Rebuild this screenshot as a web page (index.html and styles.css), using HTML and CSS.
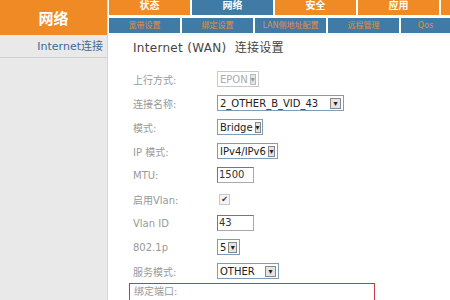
FILE: index.html
```html
<!DOCTYPE html>
<html lang="zh-CN">
<head>
    <meta charset="UTF-8">
    <title>Internet (WAN) 连接设置</title>
    <link rel="stylesheet" href="styles.css">
</head>
<body>

    <div class="page">
        <div class="sidebar">
            <div class="brand">网络</div>
            <div class="side-item">Internet连接</div>
        </div>

        <div class="main">
            <div class="tabs">
                <div class="tab">状态</div>
                <div class="tab active">网络</div>
                <div class="tab">安全</div>
                <div class="tab">应用</div>
                <div class="tab rest"></div>
            </div>
            <div class="subtabs">
                <div class="subtab">宽带设置</div>
                <div class="subtab">绑定设置</div>
                <div class="subtab">LAN侧地址配置</div>
                <div class="subtab">远程管理</div>
                <div class="subtab last">Qos</div>
            </div>

            <div class="content">
                <h2>Internet (WAN) &nbsp;连接设置</h2>

                <div class="row">
                    <label>上行方式:</label>
                    <span class="select disabled" style="width: 38px">EPON<span class="arrow">▾</span></span>
                </div>
                <div class="row">
                    <label>连接名称:</label>
                    <span class="select" style="width: 123px">2_OTHER_B_VID_43<span class="arrow">▾</span></span>
                </div>
                <div class="row">
                    <label>模式:</label>
                    <span class="select" style="width: 42px">Bridge<span class="arrow">▾</span></span>
                </div>
                <div class="row">
                    <label>IP 模式:</label>
                    <span class="select" style="width: 57px">IPv4/IPv6<span class="arrow">▾</span></span>
                </div>
                <div class="row">
                    <label>MTU:</label>
                    <span class="input">1500</span>
                </div>
                <div class="row">
                    <label>启用Vlan:</label>
                    <span class="check">✔</span>
                </div>
                <div class="row">
                    <label>Vlan ID</label>
                    <span class="input">43</span>
                </div>
                <div class="row">
                    <label>802.1p</label>
                    <span class="select" style="width: 19px">5<span class="arrow">▾</span></span>
                </div>
                <div class="row">
                    <label>服务模式:</label>
                    <span class="select" style="width: 58px">OTHER<span class="arrow">▾</span></span>
                </div>

                <div class="bind-box">
                    <label>绑定端口:</label>
                </div>
            </div>
        </div>
    </div>

</body>
</html>
```

FILE: styles.css
```css
body {
    margin: 0;
    padding: 0;
    font-family: "DejaVu Sans", "Noto Sans CJK SC", sans-serif;
    background: #fff;
    width: 450px;
    height: 300px;
    overflow: hidden;
}

.page {
    display: flex;
    height: 300px;
}

.sidebar {
    width: 107px;
    flex-shrink: 0;
    background: #e9e9e9;
    border-right: 1px solid #d6d6d6;
}

.brand {
    height: 35px;
    background: #f08a24;
    color: #fff;
    font-size: 15px;
    font-weight: bold;
    display: flex;
    align-items: center;
    justify-content: center;
}

.side-item {
    height: 22px;
    line-height: 24px;
    text-align: right;
    padding-right: 4px;
    font-size: 11px;
    color: #3f6a92;
    border-bottom: 1px solid #d0d0d0;
}

.main {
    flex: 1;
    margin-left: 1px;
    min-width: 0;
}

.tabs, .subtabs {
    display: flex;
    gap: 2px;
    height: 15px;
}

.subtabs {
    margin-top: 3px;
    border-bottom: 3px solid #f4f8fb;
}

.tab {
    width: 81px;
    flex-shrink: 0;
    background: #f08a24;
    color: #fff;
    font-size: 10px;
    font-weight: bold;
    text-align: center;
    line-height: 11px;
    overflow: hidden;
}

.tab.active {
    background: #3f7ba5;
}

.tab.rest {
    flex: 1;
    width: auto;
}

.subtab {
    width: 71px;
    flex-shrink: 0;
    background: #3f7ba5;
    color: #e88c3c;
    font-size: 8px;
    text-align: center;
    line-height: 15px;
    white-space: nowrap;
    overflow: hidden;
}

.subtab.last {
    flex: 1;
    width: auto;
}

.content {
    padding-left: 24px;
}

h2 {
    margin: 2px 0 12px 0;
    font-size: 12px;
    font-weight: normal;
    color: #444;
    letter-spacing: 0.3px;
}

.row {
    display: flex;
    align-items: center;
    height: 24px;
    font-size: 10px;
}

.row label, .bind-box label {
    width: 84px;
    flex-shrink: 0;
    color: #999;
}

.select {
    display: inline-flex;
    align-items: center;
    justify-content: space-between;
    height: 14px;
    padding-left: 2px;
    border: 1px solid #7f9db9;
    font-size: 10px;
    color: #222;
    box-sizing: content-box;
    white-space: nowrap;
}

.select.disabled {
    color: #aaa;
    border-color: #c9c9c9;
}

.arrow {
    width: 9px;
    height: 9px;
    margin-right: 2px;
    margin-left: 2px;
    border: 1px solid #888;
    background: #e4e4e4;
    font-size: 8px;
    line-height: 9px;
    text-align: center;
    color: #222;
}

.select.disabled .arrow {
    border-color: #bbb;
    color: #999;
}

.input {
    width: 34px;
    height: 14px;
    padding-left: 1px;
    border: 1px solid #aaa;
    border-top-color: #777;
    border-left-color: #777;
    font-size: 10px;
    line-height: 14px;
    color: #333;
}

.check {
    margin-left: 2px;
    width: 9px;
    height: 9px;
    border: 1px solid #c8c8c8;
    background: #f4f4f4;
    font-size: 8px;
    line-height: 9px;
    text-align: center;
    color: #333;
}

.bind-box {
    margin-left: -4px;
    width: 240px;
    height: 14px;
    border: 1px solid #c23a4c;
    padding: 2px 0 0 4px;
    font-size: 10px;
    line-height: 12px;
}
```
